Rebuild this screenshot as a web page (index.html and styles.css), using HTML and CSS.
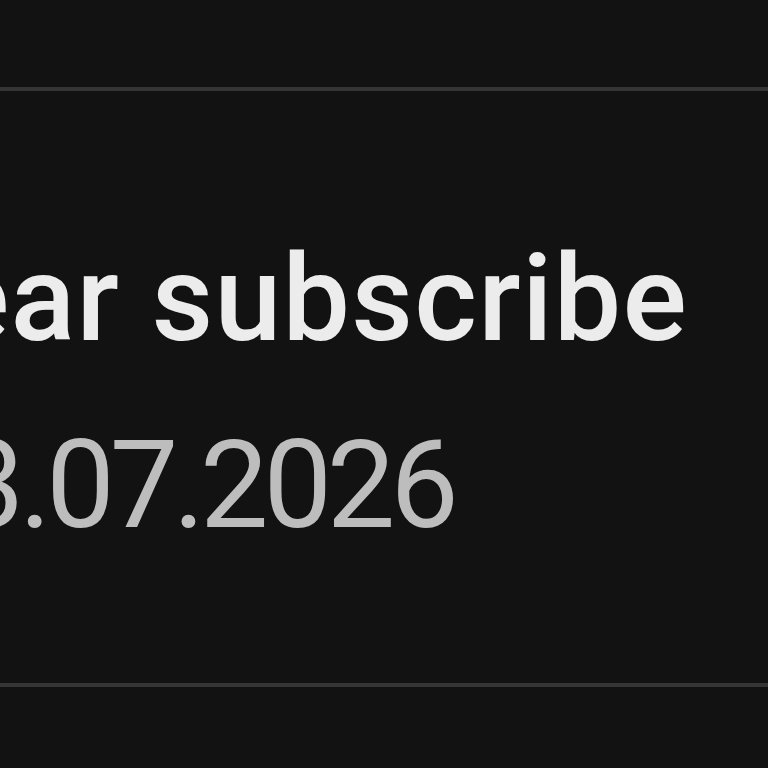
FILE: index.html
```html
<!DOCTYPE html>
<html>
<head>
<meta charset="utf-8">
<link rel="stylesheet" href="styles.css">
</head>
<body>
<div class="screen">
  <div class="divider top"></div>
  <div class="item">
    <div class="title">ear subscribe</div>
    <div class="date">3.07.2026</div>
  </div>
  <div class="divider"></div>
</div>
</body>
</html>
```
FILE: styles.css
```css
html, body {
  margin: 0;
  padding: 0;
  background: #121212;
  overflow: hidden;
}
.screen {
  width: 768px;
  height: 768px;
  display: flex;
  flex-direction: column;
  padding-top: 87px;
  box-sizing: border-box;
  font-family: Roboto, "Noto Sans", sans-serif;
}
.divider {
  height: 4px;
  background: #353535;
  flex: none;
}
.item {
  height: 592px;
  box-sizing: border-box;
  padding-top: 138px;
  overflow: hidden;
  white-space: nowrap;
}
.title {
  font-size: 120px;
  line-height: 140px;
  font-weight: 500;
  color: #ececec;
  text-indent: -55px;
  letter-spacing: 1.3px;
}
.date {
  margin-top: 27px;
  font-size: 122px;
  line-height: 180px;
  font-weight: 400;
  color: #bdbdbd;
  text-indent: -44px;
  letter-spacing: -5.2px;
}
```
